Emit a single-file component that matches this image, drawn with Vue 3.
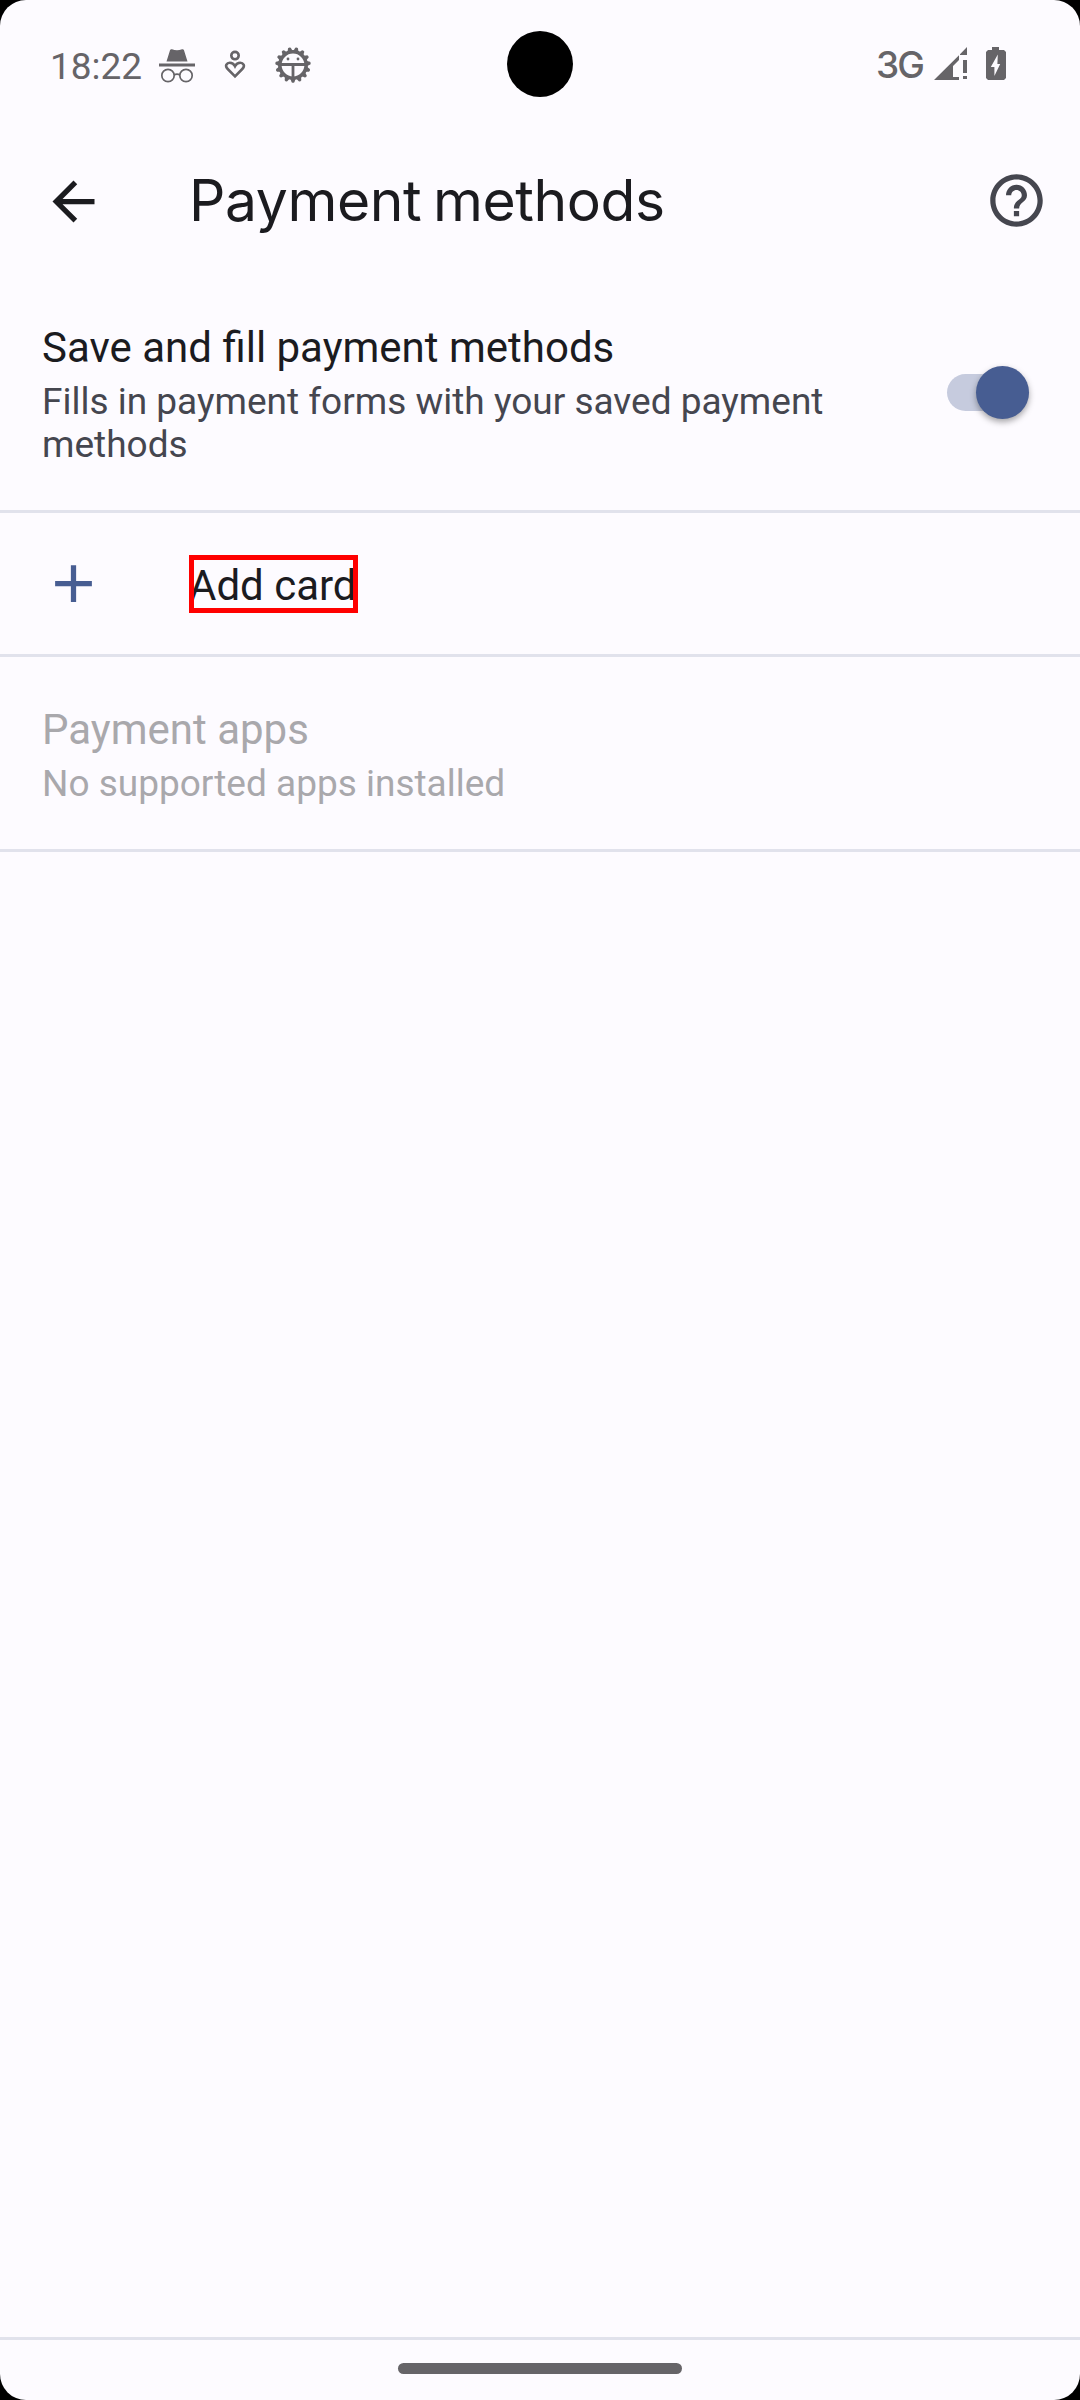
<script setup>
import { ref } from 'vue'

const autofill = ref(true)
const teeth = Array.from({ length: 15 }, (_, i) => 180 + i * 24)
</script>

<template>
  <div class="device">
    <div class="screen">
      <header class="status">
        <div class="status-left">
          <span class="time">18:22</span>
          <svg class="incognito" width="38" height="36" viewBox="0 0 38 36">
            <path d="M8.500 13.500 L12 2.200 Q12.600 .8 14 1.300 Q19 3 24 1.300 Q25.400 .8 26 2.200 L29.500 13.500 Z" fill="#666468" />
            <rect x="1" y="15.500" width="36" height="3" fill="#666468" />
            <g fill="none" stroke="#666468" stroke-width="1.700">
              <circle cx="10" cy="27.500" r="6.200" />
              <circle cx="28" cy="27.500" r="6.200" />
              <path d="M16 27 Q19 25.200 22 27" />
            </g>
          </svg>
          <svg class="wellbeing" width="22" height="30" viewBox="0 0 22 30" fill="none" stroke="#666468" stroke-width="2.600">
            <circle cx="11" cy="5.600" r="3.700" />
            <path d="M11 26.300 L3.700 19 C.3 15.500 3 12.700 5.800 12.700 C8.300 12.700 10 14.300 11 16.200 C12 14.300 13.700 12.700 16.200 12.700 C19 12.700 21.700 15.500 18.300 19 Z" />
          </svg>
          <svg class="bug" width="38" height="38" viewBox="-19 -19 38 38">
            <path v-for="a in teeth" :key="a" d="M-2.900 -13 L-1.400 -17.300 Q0 -18.400 1.400 -17.300 L2.900 -13 Z" :transform="`rotate(${a})`" fill="#666468" />
            <circle r="13.200" fill="none" stroke="#666468" stroke-width="3.600" />
            <path d="M-13 -.5 H13 M0 0 V13" stroke="#666468" stroke-width="2.800" />
            <circle cx="-5" cy="-6" r="1.400" fill="#666468" />
            <circle cx="5" cy="-6" r="1.400" fill="#666468" />
          </svg>
        </div>
        <div class="camera"></div>
        <div class="status-right">
          <span class="network">3G</span>
          <svg class="signal" width="34" height="34" viewBox="0 0 34 34" fill="#666468">
            <path d="M0 33 L25 8.300 V13 L19 19 V30 H25 V33 Z M26 7.300 L33 0 V8 H26 Z" />
            <rect x="29" y="13" width="4" height="13" />
            <rect x="29" y="29" width="4" height="3" />
          </svg>
          <svg class="battery" width="20" height="33" viewBox="0 0 20 33">
            <path d="M6 0 H13 V3 H18 L20 5 V31 L18 33 H2 L0 31 V5 L2 3 H6 Z" fill="#666468" />
            <path d="M11.800 7.500 L4.800 20 H8.400 V29 L14.200 17 H11.400 Z" fill="#fdfbff" />
          </svg>
        </div>
      </header>

      <nav class="toolbar">
        <svg class="back" width="63" height="63" viewBox="0 0 24 24" fill="#1b1b1f">
          <path d="M20 11H7.830l5.590-5.590L12 4l-8 8 8 8 1.410-1.410L7.830 13H20v-2z" />
        </svg>
        <h1>Payment methods</h1>
        <svg class="help" width="63" height="63" viewBox="0 0 24 24" fill="#45464f">
          <path d="M11 18h2v-2h-2v2zm1-16C6.480 2 2 6.480 2 12s4.480 10 10 10 10-4.480 10-10S17.520 2 12 2zm0 18c-4.410 0-8-3.590-8-8s3.590-8 8-8 8 3.590 8 8-3.590 8-8 8zm0-14c-2.210 0-4 1.790-4 4h2c0-1.100.9-2 2-2s2 .9 2 2c0 2-3 1.750-3 5h2c0-2.250 3-2.500 3-5 0-2.210-1.790-4-4-4z" />
        </svg>
      </nav>

      <main>
        <section class="row" @click="autofill = !autofill">
          <div class="copy">
            <div class="title">Save and fill payment methods</div>
            <div class="summary">Fills in payment forms with your saved payment<br />methods</div>
          </div>
          <div class="switch" :class="{ on: autofill }"><i class="thumb"></i></div>
        </section>
        <section class="row add">
          <svg class="plus" width="63" height="63" viewBox="0 0 24 24" fill="#475d92">
            <path d="M19 13h-6v6h-2v-6H5v-2h6V5h2v6h6v2z" />
          </svg>
          <span class="title highlighted">Add card</span>
        </section>
        <section class="row disabled">
          <div class="copy">
            <div class="title">Payment apps</div>
            <div class="summary">No supported apps installed</div>
          </div>
        </section>
      </main>

      <footer class="gesture"><div class="pill"></div></footer>
    </div>
  </div>
</template>

<style>
body {
  background: #000;
}
</style>

<style scoped>
.device {
  width: 1080px;
  height: 2400px;
  background: #000;
  font-family: Roboto, "Noto Sans", sans-serif;
}
.screen {
  display: flex;
  flex-direction: column;
  width: 1080px;
  height: 2400px;
  overflow: hidden;
  background: #fdfbff;
  border-radius: 26px;
}
svg {
  display: block;
  flex: none;
}
.status {
  display: grid;
  grid-template-columns: 1fr 66px 1fr;
  height: 128px;
  color: #666468;
}
.status-left,
.status-right {
  display: flex;
  align-items: flex-start;
}
.time {
  width: 108px;
  margin: 45px 0 0 50px;
  font-size: 37px;
  line-height: 44px;
}
.incognito {
  margin-top: 48px;
}
.wellbeing {
  margin: 50px 0 0 28px;
}
.bug {
  margin: 46px 0 0 28px;
}
.camera {
  width: 66px;
  height: 66px;
  margin-top: 31px;
  border-radius: 50%;
  background: #000;
}
.network {
  width: 58px;
  margin: 43px 0 0 303px;
  font: 500 37px/44px Inter, Roboto, sans-serif;
  letter-spacing: -2px;
}
.signal {
  margin-top: 47px;
}
.battery {
  margin: 47px 0 0 18px;
}
.toolbar {
  display: flex;
  align-items: flex-start;
  height: 147px;
}
.back {
  margin: 42px 0 0 42px;
}
h1 {
  flex: 1;
  margin: 37px 0 0 84px;
  font: 400 57px/72px Inter, Roboto, sans-serif;
  letter-spacing: -0.4px;
  word-spacing: -4px;
  color: #1b1b1f;
}
.help {
  margin: 41px 32px 0 0;
}
.row {
  display: flex;
  align-items: center;
  justify-content: space-between;
  box-sizing: border-box;
  padding: 48px 42px 44px;
  border-bottom: 3px solid #e1e2ec;
}
.title {
  font-size: 42px;
  line-height: 49px;
  color: #1b1b1f;
}
.summary {
  margin-top: 8px;
  font-size: 37px;
  line-height: 43px;
  color: #45464f;
}
.switch {
  display: flex;
  align-items: center;
  width: 82px;
  height: 37px;
  margin: 0 9px 4px 0;
  border-radius: 19px;
  background: #c6cbde;
}
.switch.on {
  justify-content: flex-end;
}
.thumb {
  flex: none;
  width: 53px;
  height: 53px;
  border-radius: 50%;
  background: #475d92;
  box-shadow: 0 3px 6px rgba(0, 0, 0, 0.35);
}
.add {
  justify-content: flex-start;
  height: 144px;
  padding: 0 42px;
}
.highlighted {
  position: relative;
  margin: 4px 0 0 84px;
}
.highlighted::after {
  content: "";
  position: absolute;
  left: 0;
  top: -6px;
  box-sizing: border-box;
  width: 169px;
  height: 58px;
  border: 5px solid #f00;
}
.disabled .title,
.disabled .summary {
  color: #a9a8ac;
}
.gesture {
  display: flex;
  justify-content: center;
  height: 60px;
  margin-top: auto;
  border-top: 3px solid #e1e2ec;
}
.pill {
  width: 284px;
  height: 11px;
  margin-top: 23px;
  border-radius: 6px;
  background: #666468;
}
</style>
